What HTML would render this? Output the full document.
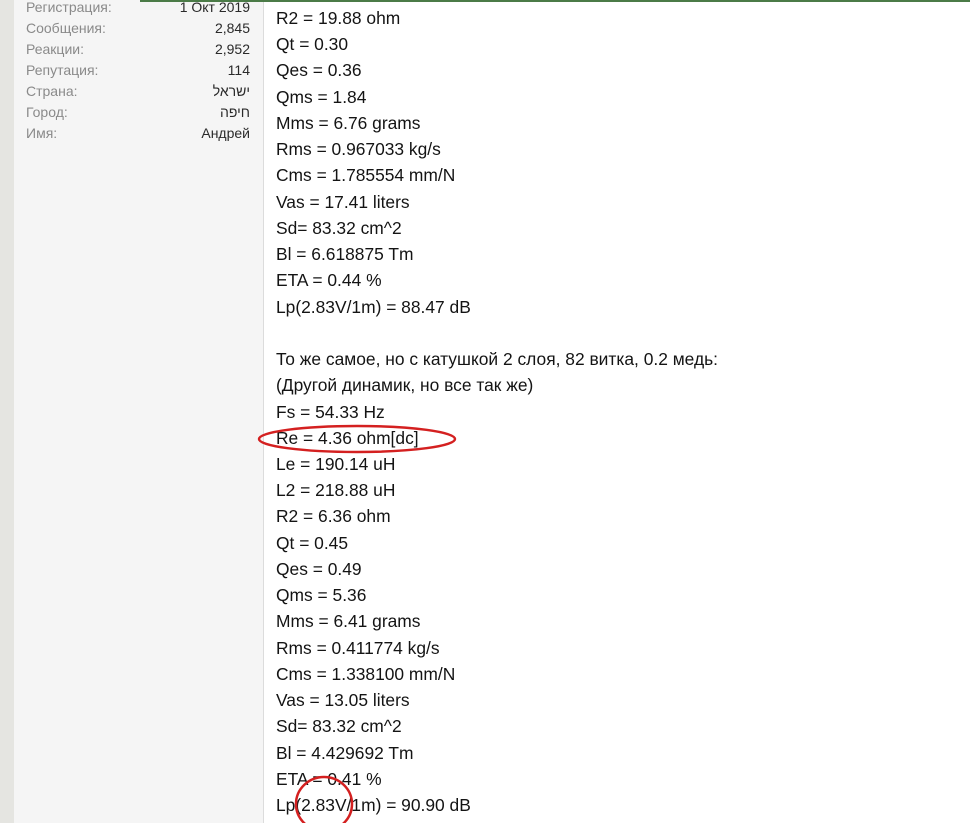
<!DOCTYPE html>
<html><head><meta charset="utf-8"><style>
html,body{margin:0;padding:0;width:970px;height:823px;overflow:hidden;background:#fff;position:relative}
.strip{position:absolute;left:0;top:0;width:14px;height:823px;background:#e5e5e1}
.side{position:absolute;left:14px;top:0;width:249px;height:823px;background:#f5f5f5;border-right:1px solid #dcdcdc}
.green{position:absolute;left:140px;top:0;right:0;height:2px;background:#4b7b47}
.row{position:absolute;left:26px;width:224px;font:14px/21px "Liberation Sans","Noto Sans CJK JP",sans-serif;color:#8a8a8a}
.row span{float:right;color:#2a2a2a}
.c{position:absolute;left:276px;top:5px;font:17.4px/26.23px "Liberation Sans",sans-serif;color:#141414;white-space:pre}
svg{position:absolute;left:0;top:0}
</style></head><body>
<div class="strip"></div><div class="side"></div><div class="green"></div>
<div class="row" style="top:-3px">Регистрация:<span>1 Окт 2019</span></div>
<div class="row" style="top:18px">Сообщения:<span>2,845</span></div>
<div class="row" style="top:39px">Реакции:<span>2,952</span></div>
<div class="row" style="top:60px">Репутация:<span>114</span></div>
<div class="row" style="top:81px">Страна:<span>ישראל</span></div>
<div class="row" style="top:102px">Город:<span>חיפה</span></div>
<div class="row" style="top:123px">Имя:<span>Андрей</span></div>
<div class="c">R2 = 19.88 ohm
Qt = 0.30
Qes = 0.36
Qms = 1.84
Mms = 6.76 grams
Rms = 0.967033 kg/s
Cms = 1.785554 mm/N
Vas = 17.41 liters
Sd= 83.32 cm^2
Bl = 6.618875 Tm
ETA = 0.44 %
Lp(2.83V/1m) = 88.47 dB

То же самое, но с катушкой 2 слоя, 82 витка, 0.2 медь:
(Другой динамик, но все так же)
Fs = 54.33 Hz
Re = 4.36 ohm[dc]
Le = 190.14 uH
L2 = 218.88 uH
R2 = 6.36 ohm
Qt = 0.45
Qes = 0.49
Qms = 5.36
Mms = 6.41 grams
Rms = 0.411774 kg/s
Cms = 1.338100 mm/N
Vas = 13.05 liters
Sd= 83.32 cm^2
Bl = 4.429692 Tm
ETA = 0.41 %
Lp(2.83V/1m) = 90.90 dB</div>
<svg width="970" height="823">
<ellipse cx="357" cy="439" rx="98" ry="13" fill="none" stroke="#d42020" stroke-width="2.5"/>
<ellipse cx="324" cy="804" rx="28" ry="27" fill="none" stroke="#d42020" stroke-width="2.5"/>
</svg>
</body></html>
